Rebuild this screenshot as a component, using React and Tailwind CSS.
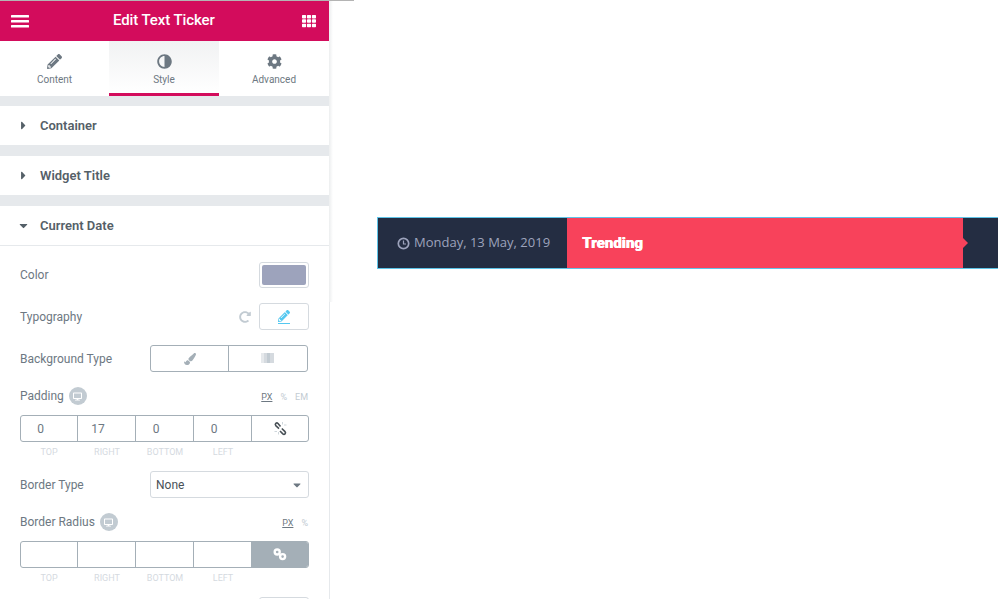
import {
  FaAdjust,
  FaCaretDown,
  FaCaretRight,
  FaCog,
  FaDesktop,
  FaPaintBrush,
  FaPencilAlt,
  FaRedoAlt,
  FaTh,
} from "react-icons/fa";

const Tab = ({ icon, label, active, width }) => (
  <div
    className={`${width} h-[55px] flex flex-col items-center pt-[13px] ${
      active ? "bg-gradient-to-b from-[#f1f2f3] to-white border-b-[3px] border-[#d30c5c]" : ""
    }`}
  >
    <div className="h-[15px] flex items-center text-[#6d7882] text-[15px]">{icon}</div>
    <div className="mt-[5px] text-[10px] leading-[12px] text-[#6d7882]">{label}</div>
  </div>
);

const Section = ({ title, open }) => (
  <div className={`h-[39px] bg-white flex items-center pl-[18px] ${open ? "border-b border-[#e6e9ec] h-[40px]" : ""}`}>
    <div className="w-[22px] -ml-px text-[#556068] text-[13px]">{open ? <FaCaretDown /> : <FaCaretRight />}</div>
    <div className="ml-px text-[13px] font-semibold text-[#556068]">{title}</div>
  </div>
);

const Responsive = () => (
  <div className="ml-[5px] w-[18px] h-[18px] rounded-full bg-[#c2cbd2] flex items-center justify-center text-white text-[9px]">
    <FaDesktop />
  </div>
);

const LinkIcon = () => (
  <svg width="14" height="13" viewBox="0 0 14 13" fill="none" stroke="white" strokeWidth="2.4">
    <circle cx="4.2" cy="4" r="2.5" />
    <circle cx="9.6" cy="8.6" r="2.5" />
  </svg>
);

const UnlinkIcon = () => (
  <svg width="15" height="15" viewBox="0 0 15 15" fill="none" stroke="#495157" strokeWidth="1.6">
    <path d="M7.5 5.5 L5 2.5 C3.6 1 1.4 3 2.8 4.6 L6 7.6" />
    <path d="M8.8 7.5 L12 10.6 C13.4 12.2 11.4 14.2 9.8 12.8 L7 10" />
    <path d="M9.5 1 V3.5 M11 4 H13.5 M1.5 10.5 H4 M5.5 11 V13.5" stroke="#c2cbd2" strokeWidth="0.8" />
  </svg>
);

const ClockIcon = () => (
  <svg width="13" height="13" viewBox="0 0 13 13" fill="none" stroke="#9da3bc" className="mr-[4px]">
    <circle cx="6.5" cy="6.5" r="5.2" strokeWidth="1.7" />
    <path d="M6.5 3.5 V7 H9" strokeWidth="1.2" />
  </svg>
);

const Dimensions = ({ values, linked }) => (
  <div>
    <div className="flex h-[27px] border border-[#a4afb7] rounded-[3px] overflow-hidden text-[12px] text-[#6d7882]">
      {values.map((value, i) => (
        <div key={i} className="w-[58px] flex items-center justify-center pr-[17px] border-r border-[#a4afb7] first:w-[57px]">
          {value}
        </div>
      ))}
      <div className={`flex-1 flex items-center justify-center ${linked ? "bg-[#a4afb7]" : ""}`}>
        {linked ? <LinkIcon /> : <UnlinkIcon />}
      </div>
    </div>
    <div className="flex mt-[5px] text-[9px] leading-[11px] text-[#d5dadf]">
      {["TOP", "RIGHT", "BOTTOM", "LEFT"].map((label) => (
        <div key={label} className="w-[58px] text-center">
          {label}
        </div>
      ))}
    </div>
  </div>
);

const App = () => {
  return (
    <div className="relative h-[599px] w-[998px] overflow-hidden bg-white font-['Roboto',sans-serif]">
      <div className="h-px w-[354px] bg-[#b4b4b4]" />
      <div className="flex">
        {/* Editor panel */}
        <aside className="relative w-[330px] h-[598px] shrink-0 border-r border-[#e6e9ec] bg-white">
          <div className="absolute top-0 left-[329px] w-[4px] h-[301px] bg-gradient-to-r from-[#eceeef] to-white" />

          <div className="h-[40px] bg-[#d30c5c] flex items-center pl-[11px] pr-[13px] text-white">
            <svg width="18" height="13" viewBox="0 0 18 13" fill="white">
              <rect width="18" height="2.6" y="0" rx="0.5" />
              <rect width="18" height="2.6" y="5" rx="0.5" />
              <rect width="18" height="2.6" y="10" rx="0.5" />
            </svg>
            <div className="ml-[84px] -mt-[2px] text-[15px] font-medium tracking-[-0.1px]">Edit Text Ticker</div>
            <FaTh className="ml-auto text-[14px]" />
          </div>

          <div className="flex h-[55px]">
            <Tab width="w-[109px]" icon={<FaPencilAlt />} label="Content" />
            <Tab width="w-[110px]" icon={<FaAdjust className="-scale-x-100" />} label="Style" active />
            <Tab width="w-[110px]" icon={<FaCog />} label="Advanced" />
          </div>

          <div className="h-[10px] bg-[#e6e9ec]" />
          <Section title="Container" />
          <div className="h-[11px] bg-[#e6e9ec]" />
          <Section title="Widget Title" />
          <div className="h-[11px] bg-[#e6e9ec]" />
          <Section title="Current Date" open />

          <div className="px-[20px] text-[12px] text-[#6d7882]">
            <div className="flex items-center justify-between mt-[15px] h-[27px]">
              <span>Color</span>
              <div className="w-[50px] h-[26px] rounded-[3px] border border-[#d5dadf] p-[2px]">
                <div className="w-full h-full rounded-[2px] bg-[#9da3bc]" />
              </div>
            </div>

            <div className="flex items-center mt-[15px] h-[27px]">
              <span>Typography</span>
              <FaRedoAlt className="ml-auto mr-[8px] text-[12px] text-[#c2cbd2]" />
              <div className="w-[50px] h-[27px] rounded-[3px] border border-[#d5dadf] flex flex-col items-center justify-center text-[#55c8f0]">
                <FaPencilAlt className="text-[12px]" />
                <div className="w-[12px] h-px bg-[#55c8f0] mt-px" />
              </div>
            </div>

            <div className="flex items-center mt-[15px] h-[27px]">
              <span>Background Type</span>
              <div className="ml-auto w-[158px] h-[27px] mr-px border border-[#a4afb7] rounded-[3px] flex">
                <div className="w-[78px] border-r border-[#a4afb7] flex items-center justify-center text-[#a4afb7] text-[12px]">
                  <FaPaintBrush />
                </div>
                <div className="flex-1 flex items-center justify-center pr-[2px] pb-[2px]">
                  <svg width="13" height="10" viewBox="0 0 13 10">
                    <rect width="3" height="10" fill="#e6e9ec" />
                    <rect x="3" width="3" height="10" fill="#d5dadf" />
                    <rect x="6" width="3" height="10" fill="#c2cbd2" />
                    <rect x="9" width="4" height="10" fill="#d5dadf" />
                  </svg>
                </div>
              </div>
            </div>

            <div className="flex items-center mt-[15px] h-[18px]">
              <span>Padding</span>
              <Responsive />
              <div className="ml-auto mt-[3px] flex gap-[8px] text-[9px] mr-px text-[#c2cbd2]">
                <span className="underline text-[#6d7882]">PX</span>
                <span>%</span>
                <span>EM</span>
              </div>
            </div>
            <div className="mt-[10px]">
              <Dimensions values={["0", "17", "0", "0"]} />
            </div>

            <div className="flex items-center mt-[13px] h-[27px]">
              <span>Border Type</span>
              <div className="ml-auto w-[159px] h-[27px] border border-[#d5dadf] rounded-[3px] flex items-center justify-between pl-[5px] pr-[5px] text-[#495157]">
                <span>None</span>
                <FaCaretDown className="text-[#6d7882] text-[12px]" />
              </div>
            </div>

            <div className="flex items-center mt-[15px] h-[18px]">
              <span>Border Radius</span>
              <Responsive />
              <div className="ml-auto mt-[3px] flex gap-[8px] text-[9px] mr-px text-[#c2cbd2]">
                <span className="underline text-[#6d7882]">PX</span>
                <span>%</span>
              </div>
            </div>
            <div className="mt-[10px]">
              <Dimensions values={["", "", "", ""]} linked />
            </div>

            <div className="ml-auto mt-[13px] w-[50px] h-[27px] rounded-[3px] border border-[#d5dadf]" />
          </div>
        </aside>

        {/* Preview */}
        <main className="flex-1 pl-[47px] pt-[216px]">
          <div className="flex h-[52px] border-y border-l border-[#5ec4e8] bg-[#242d42] font-['Open_Sans',sans-serif]">
            <div className="w-[189px] flex items-center pl-[19px] text-[13px] text-[#9da3bc]">
              <ClockIcon />
              <span>Monday, 13 May, 2019</span>
            </div>
            <div className="relative w-[396px] bg-[#f8425b] flex items-center pl-[15px]">
              <span className="font-['Roboto',sans-serif] text-[15px] font-black text-white [text-shadow:0.4px_0_0_white]">
                Trending
              </span>
              <div className="absolute left-full top-1/2 -translate-y-1/2 border-y-[5px] border-l-[5px] border-y-transparent border-l-[#f8425b]" />
            </div>
          </div>
        </main>
      </div>
    </div>
  );
};

export default App;
